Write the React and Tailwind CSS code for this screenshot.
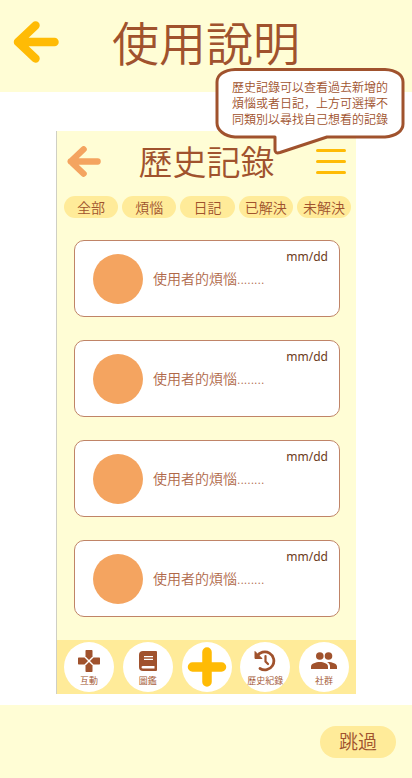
const tabs = ["全部", "煩惱", "日記", "已解決", "未解決"];
const entries = [1, 2, 3, 4];

function BackArrow({ className }) {
  return (
    <svg viewBox="0 0 46 42" className={className} fill="none" stroke="currentColor" strokeWidth="8.500" strokeLinecap="round" strokeLinejoin="round" aria-hidden="true">
      <path d="M22.500 4.500L5 21L22.500 37.500M5 21H41.500" />
    </svg>
  );
}

function PadIcon() {
  return (
    <svg viewBox="0 0 22 22" className="size-[22px]" fill="currentColor" aria-hidden="true">
      <path d="M8.200 0H13.800Q14.500 0 14.500 .7V6.500L11 10L7.500 6.500V.7Q7.500 0 8.200 0Z" />
      <path d="M8.200 22H13.800Q14.500 22 14.500 21.300V15.500L11 12L7.500 15.500V21.300Q7.500 22 8.200 22Z" />
      <path d="M0 8.200V13.800Q0 14.500 .7 14.500H6.500L10 11L6.500 7.500H.7Q0 7.500 0 8.200Z" />
      <path d="M22 8.200V13.800Q22 14.500 21.300 14.500H15.500L12 11L15.500 7.500H21.300Q22 7.500 22 8.200Z" />
    </svg>
  );
}

function BookIcon() {
  return (
    <svg viewBox="0 0 18 20" className="h-[20px] w-[18px]" aria-hidden="true">
      <path d="M4 0H17Q18 0 18 1V19Q18 20 17 20H4Q0 20 0 16V4Q0 0 4 0Z" fill="currentColor" />
      <path d="M4 15H15.500V17.500H4Q2.500 17.500 2.500 16.200Q2.500 15 4 15ZM5 5H14V6.300H5ZM5 7.700H14V9H5Z" fill="#fff" />
    </svg>
  );
}

function HistoryIcon() {
  return (
    <svg viewBox="0 0 22 22" className="size-[22px]" fill="none" stroke="currentColor" aria-hidden="true">
      <path d="M3 6.500A9 9 0 1 1 6 18.500" strokeWidth="2.800" strokeLinecap="round" />
      <path d="M1 1.500V8.500H8Z" fill="currentColor" strokeWidth="1" strokeLinejoin="round" />
      <path d="M11.500 6V11.500L14 14" strokeWidth="2.200" strokeLinecap="round" />
    </svg>
  );
}

function PeopleIcon() {
  return (
    <svg viewBox="0 0 26 18" className="h-[18px] w-[26px]" fill="currentColor" aria-hidden="true">
      <circle cx="8.800" cy="4" r="3.800" />
      <circle cx="17.500" cy="4" r="3.800" />
      <path d="M0 17V14.500C0 11.500 5 10 8.800 10S17 11.500 17 14.500V17Z" />
      <path d="M17 10C21 10 26 11.500 26 14.500V17H19V14.500C19 12.500 18 11 16 10Z" />
    </svg>
  );
}

function Tip() {
  return (
    <div className="absolute top-[67px] right-[7px] w-[190px] h-[88px]">
      <svg viewBox="0 0 190 88" className="absolute inset-0 size-full" aria-hidden="true">
        <path
          d="M20 2.500H170C181 3 188 8 188 15V57C188 64 181 69 170 70H112L65 85.500Q60 87 60 83V70H20C9 69 2 63 2 56V15C2 8 9 3 20 2.500Z"
          fill="#fff"
          stroke="#a0522d"
          strokeWidth="3"
          strokeLinejoin="round"
        />
      </svg>
      <p className="relative pt-[13px] pl-[17px] text-[12px] leading-[16px] whitespace-nowrap">
        歷史記錄可以查看過去新增的
        <br />
        煩惱或者日記，上方可選擇不
        <br />
        同類別以尋找自己想看的記錄
      </p>
    </div>
  );
}

function NavItem({ label, children }) {
  return (
    <button type="button" className="flex size-[50px] shrink-0 flex-col items-center rounded-full bg-white pt-[6px]">
      <span className="flex h-[26px] items-center">{children}</span>
      <span className="text-[9px] leading-[14px] whitespace-nowrap">{label}</span>
    </button>
  );
}

function Preview() {
  return (
    <section className="mx-14 border-l border-[#cfcfc4] bg-[#fffdd5]">
      <div className="flex h-[65px] items-center justify-between px-[10px] pb-1">
        <button type="button" aria-label="返回" className="text-[#f4a460]">
          <BackArrow className="h-[31px] w-[34px]" />
        </button>
        <h2 className="mr-2 ml-5 text-[34px] leading-[48px]">歷史記錄</h2>
        <button type="button" aria-label="選單" className="ml-4 flex w-[30px] flex-col gap-2">
          <span className="h-[3px] rounded-full bg-[#ffbb05]" />
          <span className="h-[3px] rounded-full bg-[#ffbb05]" />
          <span className="h-[3px] rounded-full bg-[#ffbb05]" />
        </button>
      </div>
      <div className="grid grid-cols-5 gap-1 pr-[5px] pl-[7px]">
        {tabs.map((tab) => (
          <button key={tab} type="button" className="h-[22px] rounded-full bg-[#ffeb99] text-[14px] leading-[24px] whitespace-nowrap">
            {tab}
          </button>
        ))}
      </div>
      <ul className="flex flex-col gap-[23px] pt-[22px] pb-[23px] pr-4 pl-[17px]">
        {entries.map((entry) => (
          <li key={entry} className="relative flex h-[77px] items-center gap-[10px] rounded-[10px] border border-[#c08467] bg-white pl-[18px]">
            <span className="size-[50px] rounded-full bg-[#f4a460]" />
            <span className="text-[14px] leading-[20px] text-[#b0694a]">使用者的煩惱........</span>
            <time className="absolute top-2 right-[11px] text-[12px] leading-[16px] font-normal text-[#6b3a20]">mm/dd</time>
          </li>
        ))}
      </ul>
      <nav className="flex h-[54px] items-center justify-between bg-[#ffeb99] pr-[7px] pl-[7px]">
        <NavItem label="互動"><PadIcon /></NavItem>
        <NavItem label="圖鑑"><BookIcon /></NavItem>
        <button type="button" aria-label="新增" className="flex size-[50px] shrink-0 items-center justify-center rounded-full bg-white text-[#ffbb05]">
          <svg viewBox="0 0 40 40" className="size-10" stroke="currentColor" strokeWidth="9.500" strokeLinecap="round" aria-hidden="true">
            <path d="M20 5V35M5.500 20H34.500" />
          </svg>
        </button>
        <NavItem label="歷史紀錄"><HistoryIcon /></NavItem>
        <NavItem label="社群"><PeopleIcon /></NavItem>
      </nav>
    </section>
  );
}

export default function App() {
  return (
    <div className="relative flex min-h-screen flex-col bg-white font-['Noto_Sans','Noto_Sans_CJK_JP',sans-serif] font-[350] text-[#a0522d]">
      <header className="flex h-[92px] items-center bg-[#fffdd5] px-[13px]">
        <button type="button" aria-label="返回" className="mb-2 text-[#ffbb05]">
          <BackArrow className="h-[42px] w-[46px]" />
        </button>
        <h1 className="mb-1.5 flex-1 pr-[46px] text-center text-[47px] leading-[68px] font-[350] whitespace-nowrap">使用說明</h1>
      </header>
      <main className="flex-1 pt-[39px] pb-[11px]">
        <Preview />
      </main>
      <footer className="flex h-[73px] items-center justify-end bg-[#fffdd5] pr-4">
        <button type="button" className="h-8 w-[76px] rounded-full bg-[#ffeb99] text-[19px] leading-[32px]">跳過</button>
      </footer>
      <Tip />
    </div>
  );
}
